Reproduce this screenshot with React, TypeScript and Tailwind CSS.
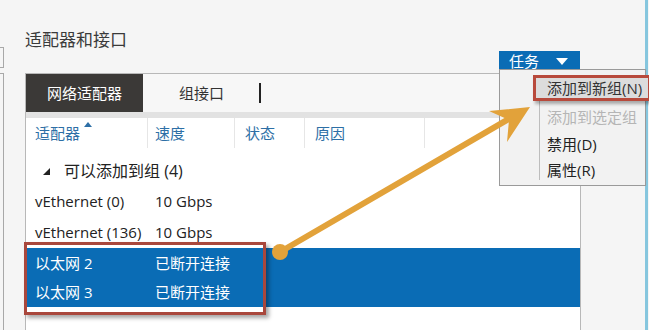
import React from "react";

const font = { fontFamily: '"Open Sans", "Noto Sans CJK SC", sans-serif' };

type Row = { name: string; speed: string; selected?: boolean; h: string };

const rows: Row[] = [
	{ name: "vEthernet (0)", speed: "10 Gbps", h: "h-[31px]" },
	{ name: "vEthernet (136)", speed: "10 Gbps", h: "h-[31px]" },
	{ name: "以太网 2", speed: "已断开连接", selected: true, h: "h-[30px]" },
	{ name: "以太网 3", speed: "已断开连接", selected: true, h: "h-[29px]" },
];

export default function App() {
	return (
		<div
			className="relative w-[649px] h-[330px] overflow-hidden bg-[#f5f5f5] flex text-[#222]"
			style={font}
		>
			{/* Left edge of a neighbouring pane */}
			<div className="w-[4px] flex flex-col pt-[47px]">
				<div className="h-[21px] border-r border-y border-[#a8a8a8]" />
				<div className="mt-[5px] flex-1 border-r border-t border-[#a8a8a8]" />
			</div>

			{/* Main column */}
			<div className="ml-[21px] w-[556px] flex flex-col">
				<div className="h-[73px] flex flex-col">
					<div className="mt-[29px] text-[17px] leading-[22px] text-[#3a3a3a]">适配器和接口</div>
					<div className="mt-auto mb-[4px] flex justify-end pr-[1px]">
						<div className="w-[81px] h-[21px] bg-[#0a6cb5] text-white text-[15px] leading-[21px] flex items-center pl-[10px]">
							<span>任务</span>
							<svg width="12" height="8" viewBox="0 0 12 8" className="ml-[17px]">
								<polygon points="0,0 12,0 6,7" fill="#fff" />
							</svg>
						</div>
					</div>
				</div>

				{/* Panel */}
				<div className="flex-1 flex flex-col border-t border-l border-r border-[#b8b8b8]">
					<div className="h-[38px] flex items-stretch bg-[#f7f7f7]">
						<div className="w-[117px] bg-[#3b3937] text-white text-[15px] flex items-center justify-center">
							网络适配器
						</div>
						<div className="ml-[36px] text-[15px] flex items-center text-[#333]">组接口</div>
						<div className="ml-[35px] flex items-center">
							<div className="w-[2px] h-[20px] bg-[#222]" />
						</div>
					</div>
					<div className="h-[6px] bg-[#e2e2e2]" />
					<div className="flex-1 bg-white flex flex-col text-[15px]">
						{/* Column headers */}
						<div className="h-[30px] flex text-[#2d6fa6]">
							<div className="relative w-[122px] border-r border-[#e6e6e6] pl-[9px] flex items-center">
								适配器
								<svg width="8" height="5" viewBox="0 0 8 5" className="absolute left-[58px] top-[4px]">
									<polygon points="0,5 8,5 4,0" fill="#2d6fa6" />
								</svg>
							</div>
							<div className="w-[87px] border-r border-[#e6e6e6] pl-[7px] flex items-center">速度</div>
							<div className="w-[70px] border-r border-[#e6e6e6] pl-[10px] flex items-center">状态</div>
							<div className="w-[120px] border-r border-[#e6e6e6] pl-[10px] flex items-center">原因</div>
						</div>
						{/* Group row */}
						<div className="mt-[8px] h-[30px] flex items-center pl-[17px] text-[16px]">
							<svg width="7" height="7" viewBox="0 0 7 7">
								<polygon points="7,0 7,7 0,7" fill="#222" />
							</svg>
							<span className="ml-[14px]">可以添加到组 (4)</span>
						</div>
						{rows.map((r) => (
							<div
								key={r.name}
								className={`${r.h} flex items-center ${r.selected ? "bg-[#0a6cb5] text-white" : ""}`}
							>
								<div className="w-[122px] pl-[9px]">{r.name}</div>
								<div className="pl-[7px]">{r.speed}</div>
							</div>
						))}
					</div>
				</div>
			</div>

			{/* Right pane strip */}
			<div className="ml-[64px] w-[3px] bg-[#86c6de]" />

			{/* Red box around selected rows */}
			<div className="absolute left-[24px] top-[242px] w-[242px] h-[73px] border-[3px] border-[#a9473c] shadow-[3px_3px_4px_rgba(0,0,0,0.35)]" />

			{/* Tasks dropdown menu */}
			<div className="absolute left-[499px] top-[69px] w-[147px] h-[117px] bg-[#f2f2f2] border border-[#9a9a9a] text-[15px]">
				<div className="absolute left-[39px] top-[6px] bottom-[5px] w-px bg-[#bdbdbd]" />
				<div className="flex flex-col pl-[47px] pt-[33px]">
					<div className="h-[28px] leading-[28px] text-[#b5b5b5]">添加到选定组</div>
					<div className="h-[26px] leading-[26px]">禁用(D)</div>
					<div className="h-[26px] leading-[26px]">属性(R)</div>
				</div>
			</div>
			<div className="absolute left-[533px] top-[75px] w-[118px] h-[26px] border-[3px] border-[#b84a3c] bg-[#dcdcdc] shadow-[2px_3px_3px_rgba(0,0,0,0.3)] text-[15px] leading-[20px] pl-[11px] text-[#333]">
				添加到新组(N)
			</div>

			{/* Orange arrow */}
			<svg className="absolute left-0 top-0" width="649" height="330" viewBox="0 0 649 330">
				<line x1="280" y1="252" x2="512" y2="117" stroke="#e2a23a" strokeWidth="6" strokeLinecap="round" />
				<polygon points="530,107 489,111 509,120 507,142" fill="#e2a23a" />
				<circle cx="280" cy="252" r="8" fill="#e2a23a" />
			</svg>
		</div>
	);
}
